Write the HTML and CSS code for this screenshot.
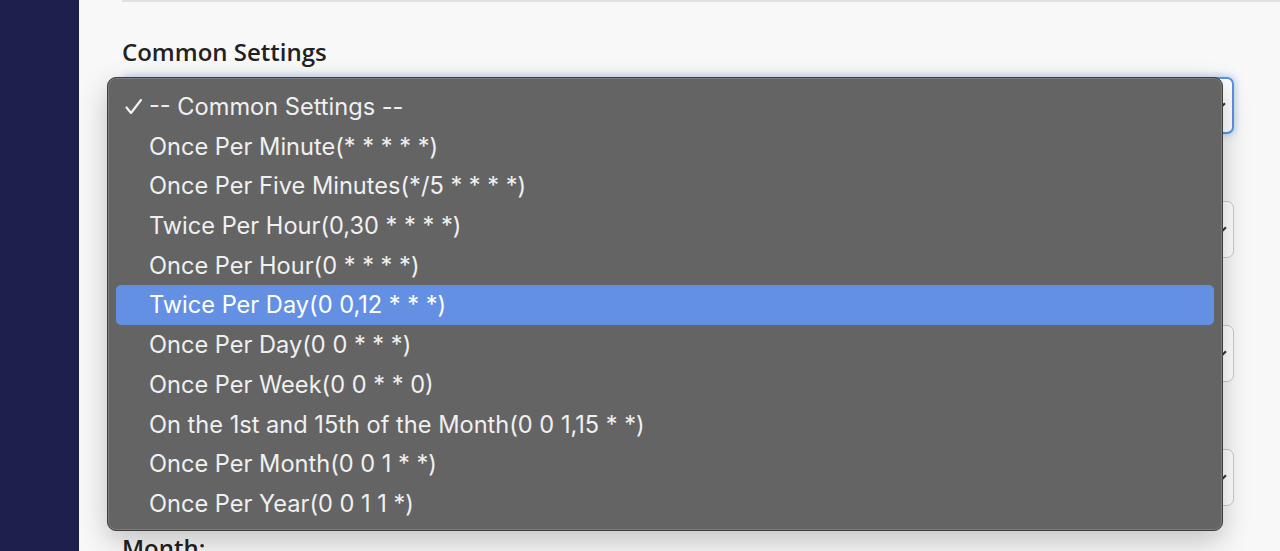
FILE: index.html
```html
<!DOCTYPE html>
<html>
<head>
<meta charset="utf-8">
<link rel="stylesheet" href="styles.css">
</head>
<body>
<div class="app">
  <aside class="sidebar"></aside>
  <main class="main">
    <div class="card-top"></div>
    <form class="form">
      <div class="group">
        <label class="label">Common Settings</label>
        <div class="select focused"><span class="value">-- Common Settings --</span><span class="chev"></span></div>
      </div>
      <div class="group">
        <label class="label">Minute:</label>
        <div class="select"><span class="value">*</span><span class="chev"></span></div>
      </div>
      <div class="group">
        <label class="label">Hour:</label>
        <div class="select"><span class="value">*</span><span class="chev"></span></div>
      </div>
      <div class="group">
        <label class="label">Day:</label>
        <div class="select"><span class="value">*</span><span class="chev"></span></div>
      </div>
      <div class="group">
        <label class="label">Month:</label>
        <div class="select"><span class="value">*</span><span class="chev"></span></div>
      </div>
    </form>
  </main>
</div>
<ul class="menu">
  <li class="opt checked"><svg class="check" width="18" height="18" viewBox="0 0 18 18"><polyline points="1.5,9.5 6,15 16,2" fill="none" stroke="#f0f0f0" stroke-width="2.2" stroke-linecap="round" stroke-linejoin="round"/></svg>-- Common Settings --</li>
  <li class="opt">Once Per Minute(* * * * *)</li>
  <li class="opt">Once Per Five Minutes(*/5 * * * *)</li>
  <li class="opt">Twice Per Hour(0,30 * * * *)</li>
  <li class="opt">Once Per Hour(0 * * * *)</li>
  <li class="opt active">Twice Per Day(0 0,12 * * *)</li>
  <li class="opt">Once Per Day(0 0 * * *)</li>
  <li class="opt">Once Per Week(0 0 * * 0)</li>
  <li class="opt">On the 1st and 15th of the Month(0 0 1,15 * *)</li>
  <li class="opt">Once Per Month(0 0 1 * *)</li>
  <li class="opt">Once Per Year(0 0 1 1 *)</li>
</ul>
</body>
</html>
```
FILE: styles.css
```css
html, body {
  margin: 0;
  padding: 0;
  height: 551px;
  overflow: hidden;
  background: #f8f8f8;
}
.app {
  display: flex;
  height: 551px;
  overflow: hidden;
}
.sidebar {
  width: 79px;
  flex: none;
  background: #1e1f4a;
}
.main {
  flex: 1;
  padding-left: 43px;
  background: #f8f8f8;
}
.card-top {
  height: 2px;
  background: #e1e1e1;
}
.form {
  padding-top: 35px;
  padding-right: 46px;
  display: flex;
  flex-direction: column;
  gap: 27px;
}
.group {
  display: flex;
  flex-direction: column;
  gap: 10px;
}
.label {
  font-family: "Open Sans", sans-serif;
  font-weight: 600;
  font-size: 24px;
  line-height: 30px;
  height: 30px;
  color: #222;
}
.select {
  height: 57px;
  box-sizing: border-box;
  border: 1px solid #c9c9c9;
  border-radius: 7px;
  background: #fff;
  display: flex;
  align-items: center;
  justify-content: space-between;
  padding: 0 8px 0 14px;
  font-family: "Liberation Sans", sans-serif;
  font-size: 20px;
  color: #333;
}
.select.focused {
  border: 2px solid #5b93e2;
  box-shadow: 0 0 6px 2px rgba(91, 147, 226, 0.35);
}
.chev {
  width: 6px;
  height: 6px;
  border-right: 2px solid #333;
  border-bottom: 2px solid #333;
  transform: rotate(45deg);
  margin-top: -4px;
}
.menu {
  position: absolute;
  left: 107px;
  top: 77px;
  width: 1116px;
  height: 454px;
  box-sizing: border-box;
  margin: 0;
  padding: 9px 8px 8px 8px;
  list-style: none;
  background: #646464;
  border: 1px solid #3e3e3e;
  border-radius: 9px;
  box-shadow: inset 0 0 0 1px #7c7c7c, 0 10px 28px rgba(0, 0, 0, 0.22);
}
.opt {
  position: relative;
  height: 39.7px;
  line-height: 39.7px;
  padding-left: 33px;
  font-family: "Inter", sans-serif;
  font-size: 23.6px;
  color: #f0f0f0;
  border-radius: 5px;
  white-space: nowrap;
}
.opt.active {
  background: #6490e4;
  color: #fff;
}
.check {
  position: absolute;
  left: 9px;
  top: 11px;
}
```
